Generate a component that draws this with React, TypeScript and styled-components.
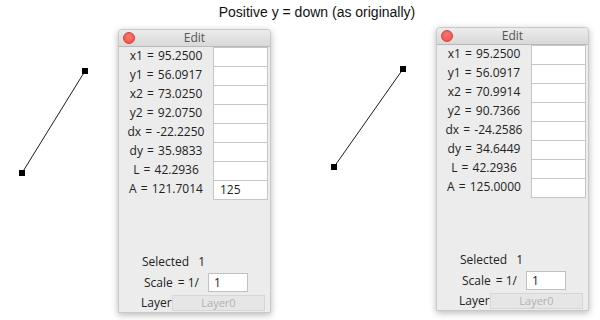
import styled, { createGlobalStyle } from "styled-components";

const GlobalStyle = createGlobalStyle`
  html, body {
    margin: 0;
    padding: 0;
    background: #ffffff;
  }
  body {
    font-family: "Liberation Sans", Arial, sans-serif;
  }
`;

type Field = { label: string; value: string; entry?: string };

type Scene = {
  canvasWidth: number;
  from: [number, number];
  to: [number, number];
  top: number;
  fields: Field[];
};

const scenes: Scene[] = [
  {
    canvasWidth: 118,
    from: [85, 45],
    to: [22, 147],
    top: 3,
    fields: [
      { label: "x1", value: "95.2500" },
      { label: "y1", value: "56.0917" },
      { label: "x2", value: "73.0250" },
      { label: "y2", value: "92.0750" },
      { label: "dx", value: "-22.2250" },
      { label: "dy", value: "35.9833" },
      { label: "L", value: "42.2936" },
      { label: "A", value: "121.7014", entry: "125" },
    ],
  },
  {
    canvasWidth: 117,
    from: [84, 43],
    to: [15, 141],
    top: 1,
    fields: [
      { label: "x1", value: "95.2500" },
      { label: "y1", value: "56.0917" },
      { label: "x2", value: "70.9914" },
      { label: "y2", value: "90.7366" },
      { label: "dx", value: "-24.2586" },
      { label: "dy", value: "34.6449" },
      { label: "L", value: "42.2936" },
      { label: "A", value: "125.0000" },
    ],
  },
];

const App = () => {
  return (
    <>
      <GlobalStyle />
      <Page>
        <Heading>Positive y = down (as originally)</Heading>
        <Stage>
          {scenes.map((scene, i) => (
            <SceneBlock key={i}>
              <Canvas width={scene.canvasWidth} height={290}>
                <line
                  x1={scene.from[0]}
                  y1={scene.from[1]}
                  x2={scene.to[0]}
                  y2={scene.to[1]}
                  stroke="#1a1a1a"
                  strokeWidth={1}
                />
                <rect x={scene.from[0] - 3} y={scene.from[1] - 3} width={6} height={6} fill="#000" />
                <rect x={scene.to[0] - 3} y={scene.to[1] - 3} width={6} height={6} fill="#000" />
              </Canvas>
              <EditWindow $top={scene.top}>
                <TitleBar>
                  <CloseDot />
                  <TitleText>Edit</TitleText>
                </TitleBar>
                <Fields>
                  {scene.fields.map((f) => (
                    <FieldRow key={f.label}>
                      <FieldLabel>
                        {f.label} = {f.value}
                      </FieldLabel>
                      <EntryBox>{f.entry}</EntryBox>
                    </FieldRow>
                  ))}
                </Fields>
                <Footer>
                  <SelectedRow>
                    <span>Selected</span>
                    <span>1</span>
                  </SelectedRow>
                  <ScaleRow>
                    <ScaleLabel>
                      <span>Scale</span>
                      <span>= 1/</span>
                    </ScaleLabel>
                    <ScaleInput>1</ScaleInput>
                  </ScaleRow>
                  <LayerRow>
                    <LayerLabel>Layer</LayerLabel>
                    <LayerBox>Layer0</LayerBox>
                  </LayerRow>
                </Footer>
              </EditWindow>
            </SceneBlock>
          ))}
        </Stage>
      </Page>
    </>
  );
};

const Page = styled.main`
  width: 600px;
  height: 320px;
  overflow: hidden;
  display: flex;
  flex-direction: column;
`;

const Heading = styled.h1`
  margin: 0;
  height: 26px;
  padding-left: 34px;
  font-family: "Liberation Sans", Arial, sans-serif;
  font-weight: normal;
  font-size: 14px;
  line-height: 24px;
  color: #111;
  text-align: center;
`;

const Stage = styled.div`
  display: flex;
  gap: 48px;
  align-items: flex-start;
`;

const SceneBlock = styled.section`
  display: flex;
  align-items: flex-start;
`;

const Canvas = styled.svg`
  display: block;
  flex: none;
`;

const EditWindow = styled.div<{ $top: number }>`
  margin-top: ${(p) => p.$top}px;
  width: 153px;
  height: 284px;
  box-sizing: border-box;
  display: flex;
  flex-direction: column;
  background: #ececec;
  border: 1px solid #c9c9c9;
  border-radius: 4px 4px 0 0;
  box-shadow: 0 2px 7px rgba(0, 0, 0, 0.28);
  font-family: "Open Sans", "Liberation Sans", sans-serif;
  font-size: 12px;
  color: #222;
`;

const TitleBar = styled.div`
  position: relative;
  height: 16px;
  display: flex;
  align-items: center;
  justify-content: center;
  background: linear-gradient(#ececec, #d9d9d9);
  border-bottom: 1px solid #b9b9b9;
  border-radius: 4px 4px 0 0;
`;

const CloseDot = styled.span`
  position: absolute;
  left: 4px;
  top: 2px;
  width: 12px;
  height: 12px;
  border-radius: 50%;
  background: radial-gradient(circle at 50% 40%, #ff7a72, #f04a44);
  border: 1px solid #d2413b;
  box-sizing: border-box;
`;

const TitleText = styled.span`
  font-size: 12px;
  line-height: 16px;
  color: #555;
`;

const Fields = styled.div`
  display: flex;
  flex-direction: column;
`;

const FieldRow = styled.div`
  display: flex;
  height: 19px;
`;

const FieldLabel = styled.div`
  width: 94px;
  text-align: center;
  line-height: 18px;
  white-space: pre;
  word-spacing: 1px;
`;

const EntryBox = styled.div`
  width: 55px;
  box-sizing: border-box;
  height: 20px;
  margin-bottom: -1px;
  background: #fff;
  border: 1px solid #c6c6c6;
  padding-left: 6px;
  line-height: 18px;
`;

const Footer = styled.div`
  margin-top: auto;
  display: flex;
  flex-direction: column;
  padding-bottom: 1px;
  font-size: 12px;
`;

const SelectedRow = styled.div`
  display: flex;
  gap: 9px;
  padding-left: 23px;
  height: 16px;
  line-height: 16px;
`;

const ScaleRow = styled.div`
  display: flex;
  align-items: center;
  padding-left: 25px;
  margin-top: 2px;
  height: 20px;
`;

const ScaleLabel = styled.div`
  width: 64px;
  display: flex;
  gap: 5px;
`;

const ScaleInput = styled.div`
  width: 40px;
  height: 19px;
  box-sizing: border-box;
  background: #fff;
  border: 1px solid #c0c0c0;
  padding-left: 5px;
  line-height: 17px;
`;

const LayerRow = styled.div`
  display: flex;
  align-items: center;
  padding-left: 22px;
  margin-top: 2px;
  height: 17px;
`;

const LayerLabel = styled.span`
  width: 31px;
`;

const LayerBox = styled.div`
  width: 93px;
  height: 16px;
  box-sizing: border-box;
  border: 1px solid #d6d6d6;
  background: #e6e6e6;
  color: #b2b2b2;
  font-size: 11px;
  text-align: center;
  line-height: 14px;
`;

export default App;
